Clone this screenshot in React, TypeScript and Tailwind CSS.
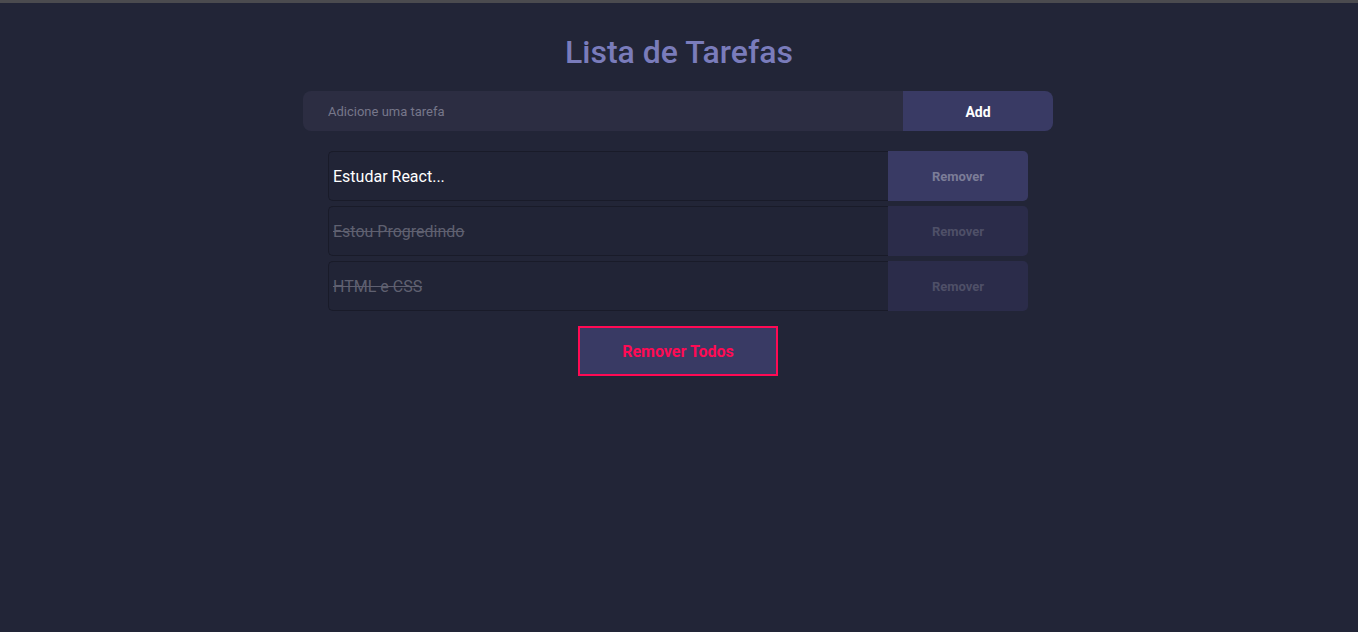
import { useState } from 'react';

type Task = { id: number; text: string; done: boolean };

const initialTasks: Task[] = [
  { id: 1, text: 'Estudar React...', done: false },
  { id: 2, text: 'Estou Progredindo', done: true },
  { id: 3, text: 'HTML e CSS', done: true },
];

export default function App() {
  const [tasks, setTasks] = useState<Task[]>(initialTasks);
  const [value, setValue] = useState('');

  const add = () => {
    if (!value.trim()) return;
    setTasks([...tasks, { id: Date.now(), text: value, done: false }]);
    setValue('');
  };

  return (
    <div className="min-h-screen bg-[#222537] border-t-[3px] border-[#4b4b4f] font-['Roboto',sans-serif]">
      <div className="flex flex-col items-center pt-[30px] pr-[2px]">
        <h1 className="ml-[2px] text-[32px] leading-[38px] font-medium text-[#7a7cbb]">Lista de Tarefas</h1>

        <div className="mt-[20px] flex w-[750px] h-[40px] rounded-lg overflow-hidden">
          <input
            value={value}
            onChange={(e) => setValue(e.target.value)}
            placeholder="Adicione uma tarefa"
            className="flex-1 bg-[#2c2d42] pl-[25px] pt-[2px] text-[13px] text-white placeholder:text-[#77778a] outline-none"
          />
          <button onClick={add} className="w-[150px] pt-[2px] bg-[#393a64] text-white text-[14px] font-bold">
            Add
          </button>
        </div>

        <ul className="mt-[20px] flex flex-col gap-[5px] w-[700px]">
          {tasks.map((t) => (
            <li key={t.id} className="relative flex h-[50px]">
              <span
                onClick={() => setTasks(tasks.map((x) => (x.id === t.id ? { ...x, done: !x.done } : x)))}
                className={
                  t.done
                    ? 'flex-1 flex items-center pl-[4px] pt-[2px] text-[16px] text-[#5f6070] line-through cursor-pointer rounded-l-[5px] border border-r-0 border-[#191b29] bg-[#212436]'
                    : 'flex-1 flex items-center pl-[4px] pt-[2px] text-[16px] text-white cursor-pointer rounded-l-[5px] border border-r-0 border-[#191b29] bg-[#212436]'
                }
              >
                {t.text}
              </span>
              <button
                onClick={() => setTasks(tasks.filter((x) => x.id !== t.id))}
                className={
                  t.done
                    ? 'w-[140px] pt-[2px] rounded-r-[5px] bg-[#2b2c4a] text-[13px] font-bold text-[#4f5068]'
                    : 'w-[140px] pt-[2px] rounded-r-[5px] bg-[#393a64] text-[13px] font-bold text-[#7c7d98]'
                }
              >
                Remover
              </button>
            </li>
          ))}
        </ul>

        <button
          onClick={() => setTasks([])}
          className="mt-[15px] w-[200px] h-[50px] pt-[2px] border-2 border-[#ff0a54] bg-[#393a64] text-[#ff0a54] text-[16px] font-bold"
        >
          Remover Todos
        </button>
      </div>
    </div>
  );
}
